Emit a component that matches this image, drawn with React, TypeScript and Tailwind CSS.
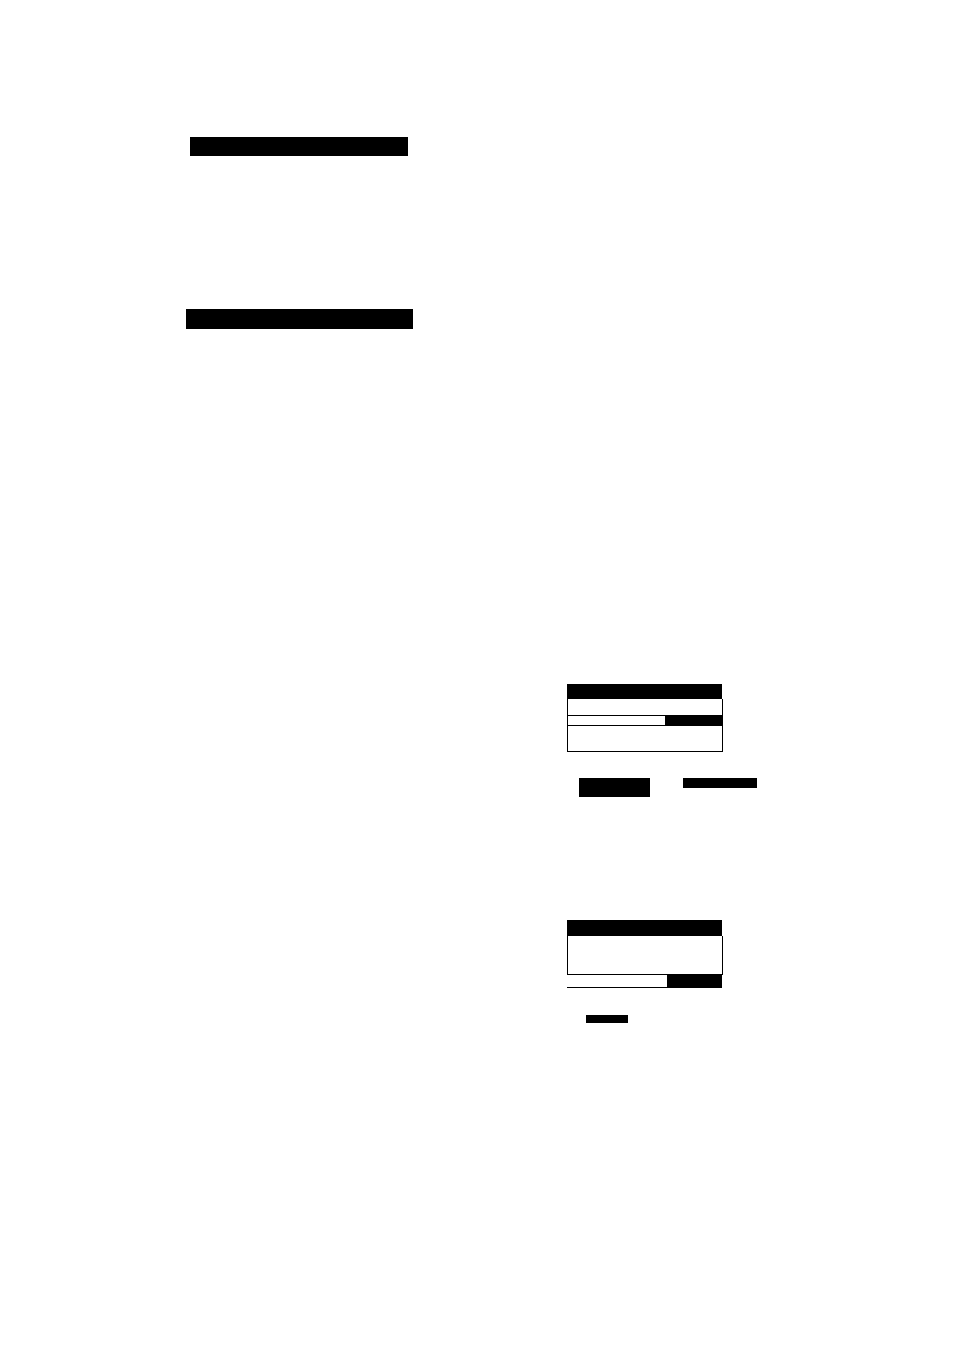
export default function App() {
  return (
    <div className="w-[954px] h-[1350px] bg-white pt-[137px]">
      {/* left column bars */}
      <div className="ml-[190px] w-[218px] h-[19px] bg-black" />
      <div className="ml-[186px] mt-[153px] w-[227px] h-[20px] bg-black" />

      {/* right column */}
      <div className="ml-[567px] mt-[355px] w-[200px]">
        {/* table one */}
        <div className="w-[156px]">
          <div className="w-[155px] h-[15px] bg-black" />
          <div className="border-x border-b border-black">
            <div className="h-[16px]" />
            <div className="flex h-[11px] border-y border-black">
              <div className="flex-1" />
              <div className="w-[57px] bg-black" />
            </div>
            <div className="h-[25px]" />
          </div>
        </div>

        <div className="flex items-start mt-[26px]">
          <div className="shrink-0 ml-[12px] w-[71px] h-[19px] bg-black" />
          <div className="shrink-0 ml-[33px] w-[74px] h-[10px] bg-black" />
        </div>

        {/* table two */}
        <div className="mt-[123px] w-[156px]">
          <div className="w-[155px] h-[16px] bg-black" />
          <div className="h-[39px] border-x border-b border-black" />
          <div className="flex w-[155px] h-[13px] border-b border-black">
            <div className="flex-1" />
            <div className="w-[55px] bg-black" />
          </div>
        </div>

        <div className="mt-[27px] ml-[19px] w-[42px] h-[8px] bg-black" />
      </div>
    </div>
  );
}
